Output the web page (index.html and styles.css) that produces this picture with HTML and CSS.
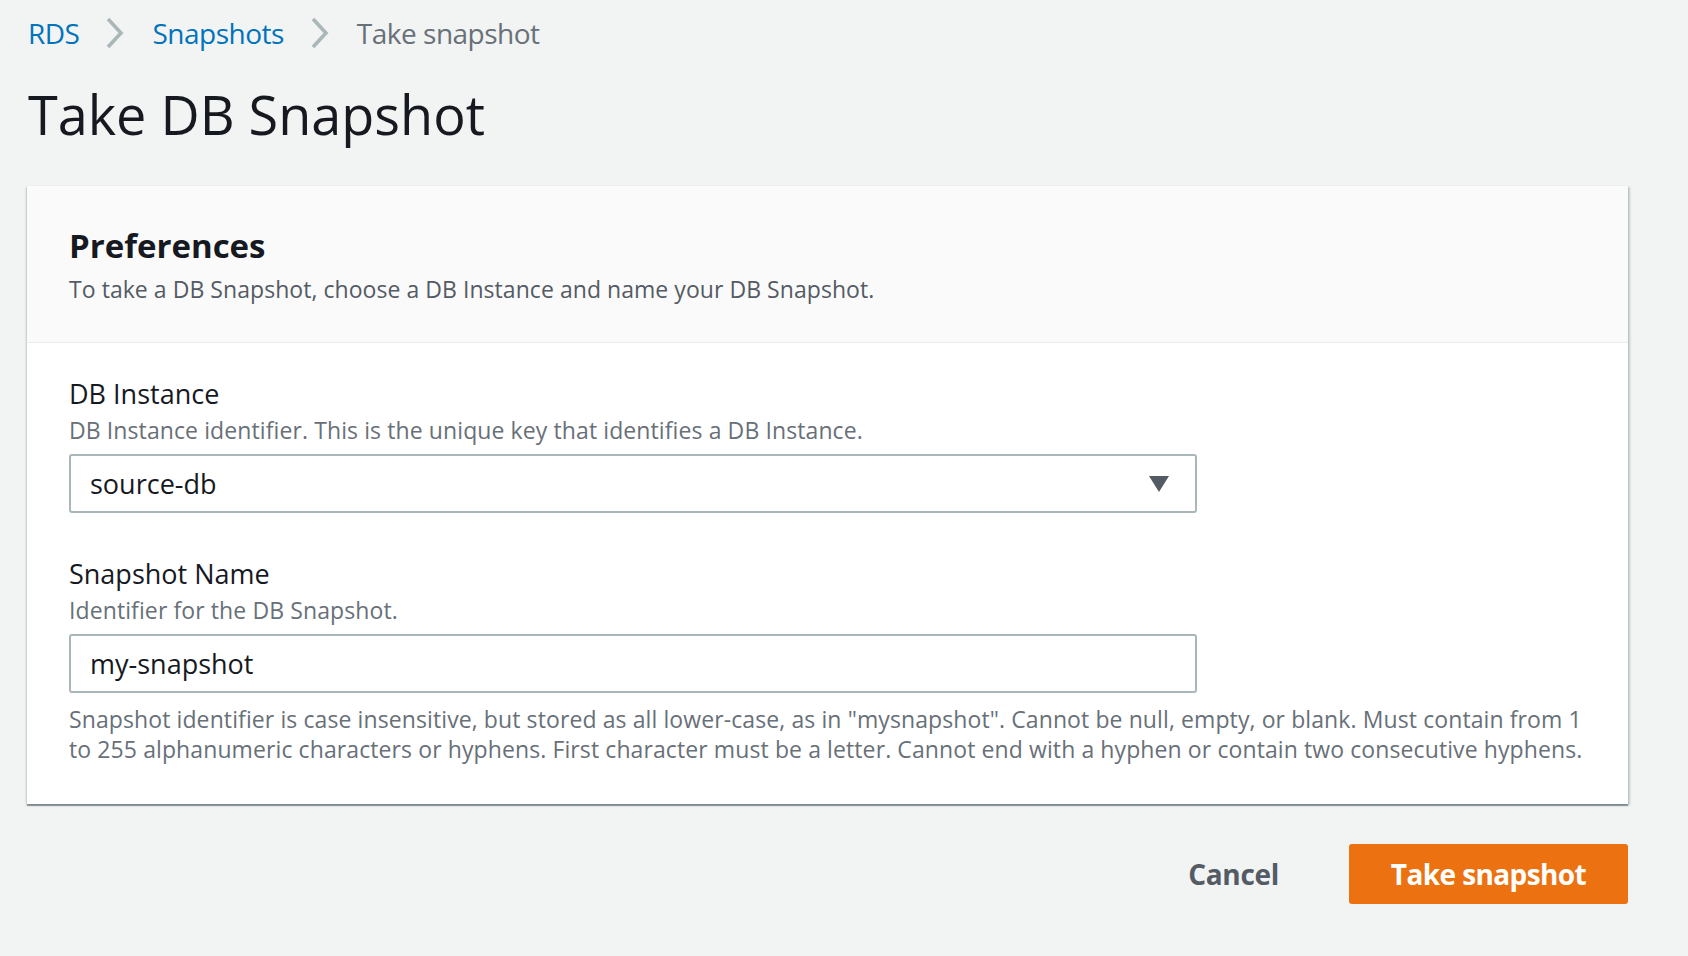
FILE: index.html
```html
<!DOCTYPE html>
<html lang="en">
<head>
<meta charset="utf-8">
<title>Take DB Snapshot</title>
<link rel="stylesheet" href="styles.css">
</head>
<body>
<div class="page">
  <nav class="breadcrumbs">
    <a class="crumb link" href="#">RDS</a>
    <svg class="chev" viewBox="0 0 20 32" aria-hidden="true"><path d="M3 2 L16 16 L3 30" fill="none" stroke="#aab7b8" stroke-width="3.6"/></svg>
    <a class="crumb link" href="#">Snapshots</a>
    <svg class="chev" viewBox="0 0 20 32" aria-hidden="true"><path d="M3 2 L16 16 L3 30" fill="none" stroke="#aab7b8" stroke-width="3.6"/></svg>
    <span class="crumb current">Take snapshot</span>
  </nav>

  <h1 class="title">Take DB Snapshot</h1>

  <section class="card">
    <header class="card-header">
      <h2 class="card-title">Preferences</h2>
      <p class="card-desc">To take a DB Snapshot, choose a DB Instance and name your DB Snapshot.</p>
    </header>
    <div class="card-body">
      <div class="field">
        <div class="label">DB Instance</div>
        <div class="desc">DB Instance identifier. This is the unique key that identifies a DB Instance.</div>
        <div class="control select">
          <span class="value">source-db</span>
          <svg class="caret" viewBox="0 0 20 16" aria-hidden="true"><path d="M0 0 H20 L10 16 Z" fill="#545b64"/></svg>
        </div>
      </div>
      <div class="field">
        <div class="label">Snapshot Name</div>
        <div class="desc">Identifier for the DB Snapshot.</div>
        <div class="control input"><span class="value">my-snapshot</span></div>
        <p class="help">Snapshot identifier is case insensitive, but stored as all lower-case, as in "mysnapshot". Cannot be null, empty, or blank. Must contain from 1 to 255 alphanumeric characters or hyphens. First character must be a letter. Cannot end with a hyphen or contain two consecutive hyphens.</p>
      </div>
    </div>
  </section>

  <div class="actions">
    <button class="btn-link" type="button">Cancel</button>
    <button class="btn-primary" type="button">Take snapshot</button>
  </div>
</div>
</body>
</html>
```

FILE: styles.css
```css
* { box-sizing: border-box; }
html, body { margin: 0; padding: 0; }
body {
  background: #f2f3f3;
  font-family: "Open Sans", "Noto Sans", "Liberation Sans", sans-serif;
  color: #16191f;
  width: 1688px;
  height: 956px;
  overflow: hidden;
}
.page {
  padding: 13px 60px 0 27px;
}
.breadcrumbs {
  display: flex;
  align-items: center;
  height: 40px;
  font-size: 28px;
  line-height: 40px;
  letter-spacing: -0.5px;
  padding-left: 1px;
}
.crumb { text-decoration: none; }
.link { color: #0073bb; }
.current { color: #687078; }
.chev {
  width: 20px;
  height: 32px;
  margin: 0 27px 0 26px;
}
.title {
  margin: 29px 0 0 1px;
  font-size: 54px;
  line-height: 64px;
  font-weight: 400;
  letter-spacing: 0;
  color: #16191f;
}
.card {
  margin-top: 40px;
  background: #fff;
  box-shadow: 0 2px 1px rgba(0, 28, 36, 0.35), 2px 1px 2px rgba(0, 28, 36, 0.18), -1px 1px 2px rgba(0, 28, 36, 0.15);
}
.card-header {
  background: #fafafa;
  border-bottom: 1px solid #eaeded;
  padding: 39px 42px 38px;
}
.card-title {
  margin: 0;
  font-size: 33px;
  line-height: 42px;
  font-weight: 700;
  letter-spacing: 0;
}
.card-desc {
  margin: 7px 0 0;
  font-size: 23px;
  line-height: 30px;
  color: #545b64;
  letter-spacing: 0.05px;
}
.card-body {
  padding: 34px 42px 40px;
  display: flex;
  flex-direction: column;
  gap: 44px;
}
.field { display: flex; flex-direction: column; }
.label {
  font-size: 27px;
  line-height: 34px;
  color: #16191f;
}
.desc {
  margin-top: 4px;
  font-size: 23px;
  line-height: 30px;
  color: #687078;
  letter-spacing: 0.1px;
}
.control {
  margin-top: 9px;
  width: 1128px;
  height: 59px;
  border: 2px solid #aab7b8;
  border-radius: 3px;
  background: #fff;
  display: flex;
  align-items: center;
  padding: 0 26px 0 19px;
  font-size: 27px;
  color: #16191f;
}
.select { justify-content: space-between; }
.caret { width: 20px; height: 16px; }
.help {
  margin: 11px 0 0;
  font-size: 23px;
  line-height: 30px;
  color: #687078;
  letter-spacing: 0.1px;
}
.actions {
  margin-top: 40px;
  display: flex;
  justify-content: flex-end;
  align-items: center;
  gap: 70px;
}
button {
  font-family: inherit;
  cursor: pointer;
}
.btn-link {
  background: none;
  border: none;
  padding: 0;
  font-size: 28px;
  font-weight: 700;
  color: #545b64;
  letter-spacing: -0.3px;
}
.btn-primary {
  width: 279px;
  height: 60px;
  border: none;
  border-radius: 3px;
  background: #ec7211;
  color: #fff;
  font-size: 28px;
  font-weight: 700;
  letter-spacing: -0.6px;
}
```
